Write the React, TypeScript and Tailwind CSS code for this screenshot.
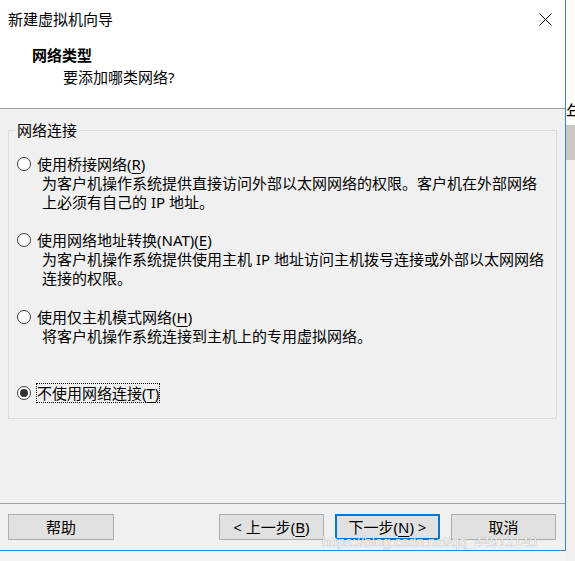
import React from "react";

function Radio({ checked }: { checked?: boolean }) {
  return (
    <span className="flex h-[14px] w-[14px] shrink-0 items-center justify-center rounded-full border border-[#3c3c3c] bg-white">
      {checked ? <span className="h-[8px] w-[8px] rounded-full bg-[#333333]" /> : null}
    </span>
  );
}

function U({ children }: { children: React.ReactNode }) {
  return <span className="underline decoration-1 underline-offset-[3px]">{children}</span>;
}

type Item = {
  label: React.ReactNode;
  desc: string[];
  mt: string;
  checked?: boolean;
};

export default function App() {
  const items: Item[] = [
    {
      label: (
        <>
          使用桥接网络(<U>R</U>)
        </>
      ),
      desc: ["为客户机操作系统提供直接访问外部以太网网络的权限。客户机在外部网络", "上必须有自己的 IP 地址。"],
      mt: "mt-[14px]",
    },
    {
      label: (
        <>
          使用网络地址转换(NAT)(<U>E</U>)
        </>
      ),
      desc: ["为客户机操作系统提供使用主机 IP 地址访问主机拨号连接或外部以太网网络", "连接的权限。"],
      mt: "mt-[18px]",
    },
    {
      label: (
        <>
          使用仅主机模式网络(<U>H</U>)
        </>
      ),
      desc: ["将客户机操作系统连接到主机上的专用虚拟网络。"],
      mt: "mt-[19px]",
    },
    {
      label: (
        <>
          不使用网络连接(<U>T</U>)
        </>
      ),
      desc: [],
      mt: "mt-[37px]",
      checked: true,
    },
  ];

  return (
    <div className="relative flex h-[561px] w-[575px] overflow-hidden bg-[#f2f2f2] font-['Segoe_UI','Noto_Sans','Noto_Sans_CJK_SC',sans-serif] text-[15px] leading-[20px] text-black">
      <div className="flex w-[566px] flex-col">
        <div className="flex h-[551px] flex-col border-b border-r border-[#3a84cc] bg-[#f0f0f0]">
          {/* header */}
          <div className="flex h-[109px] flex-col border-b border-[#a0a0a0] bg-white">
            <div className="flex h-[36px] items-center justify-between pl-[8px] pr-[13px] pt-[1px]">
              <span className="text-[15px]">新建虚拟机向导</span>
              <svg width="13" height="13" viewBox="0 0 13 13" className="mt-[1px]">
                <path d="M0.5 0.5 L12.5 12.5 M12.5 0.5 L0.5 12.5" stroke="#000" strokeWidth="1" fill="none" />
              </svg>
            </div>
            <div className="ml-[32px] mt-[9px] font-bold">网络类型</div>
            <div className="ml-[63px] mt-[2px]">要添加哪类网络?</div>
          </div>

          {/* body */}
          <div className="px-[8px] pt-[11px]">
            <fieldset className="border border-[#dcdcdc] px-[6px] pb-[15px]">
              <legend className="px-[2px] leading-[20px]">网络连接</legend>
              {items.map((it, i) => (
                <div key={i} className={it.mt}>
                  <div className="flex h-[20px] items-center">
                    <span className="ml-[2px]">
                      <Radio checked={it.checked} />
                    </span>
                    {it.checked ? (
                      <span className="ml-[5px] border border-dotted border-black leading-[18px]">{it.label}</span>
                    ) : (
                      <span className="ml-[6px]">{it.label}</span>
                    )}
                  </div>
                  {it.desc.map((d, j) => (
                    <div key={j} className="whitespace-nowrap pl-[27px] leading-[19px]">
                      {d}
                    </div>
                  ))}
                </div>
              ))}
            </fieldset>
          </div>

          {/* footer */}
          <div className="mt-auto flex border-t border-[#a0a0a0] pb-[10px] pl-[8px] pr-[9px] pt-[10px] leading-[16px]">
            <button className="flex h-[26px] w-[106px] items-center justify-center border border-[#adadad] bg-[#e1e1e1]">
              帮助
            </button>
            <div className="flex-1" />
            <div className="flex gap-[11px]">
              <button className="flex h-[26px] w-[105px] items-center justify-center border border-[#adadad] bg-[#e1e1e1]">
                &lt; 上一步(<U>B</U>)
              </button>
              <button className="flex h-[26px] w-[105px] items-center justify-center border-2 border-[#0078d7] bg-[#e1e1e1]">
                下一步(<U>N</U>) &gt;
              </button>
              <button className="flex h-[26px] w-[105px] items-center justify-center border border-[#adadad] bg-[#e1e1e1]">
                取消
              </button>
            </div>
          </div>
        </div>
        <div className="flex-1 bg-[#f4f4f4]" />
      </div>

      {/* right strip */}
      <div className="flex w-[9px] flex-col">
        <div className="h-[99px] bg-[#fdfdfd]" />
        <div className="h-[26px] overflow-hidden bg-white text-[18px] leading-[26px]">年</div>
        <div className="h-[35px] bg-[#c8c8c8]" />
        <div className="flex-1 bg-[#f0f0f0]" />
      </div>

      {/* watermark */}
      <div className="pointer-events-none absolute left-[322px] top-[535px] font-['Liberation_Sans',sans-serif] text-[14px] leading-[14px] text-white/90 [text-shadow:0_0_1px_rgba(0,0,0,0.45)]">
        https://blog.csdn.net/qq_44913140
      </div>
    </div>
  );
}
